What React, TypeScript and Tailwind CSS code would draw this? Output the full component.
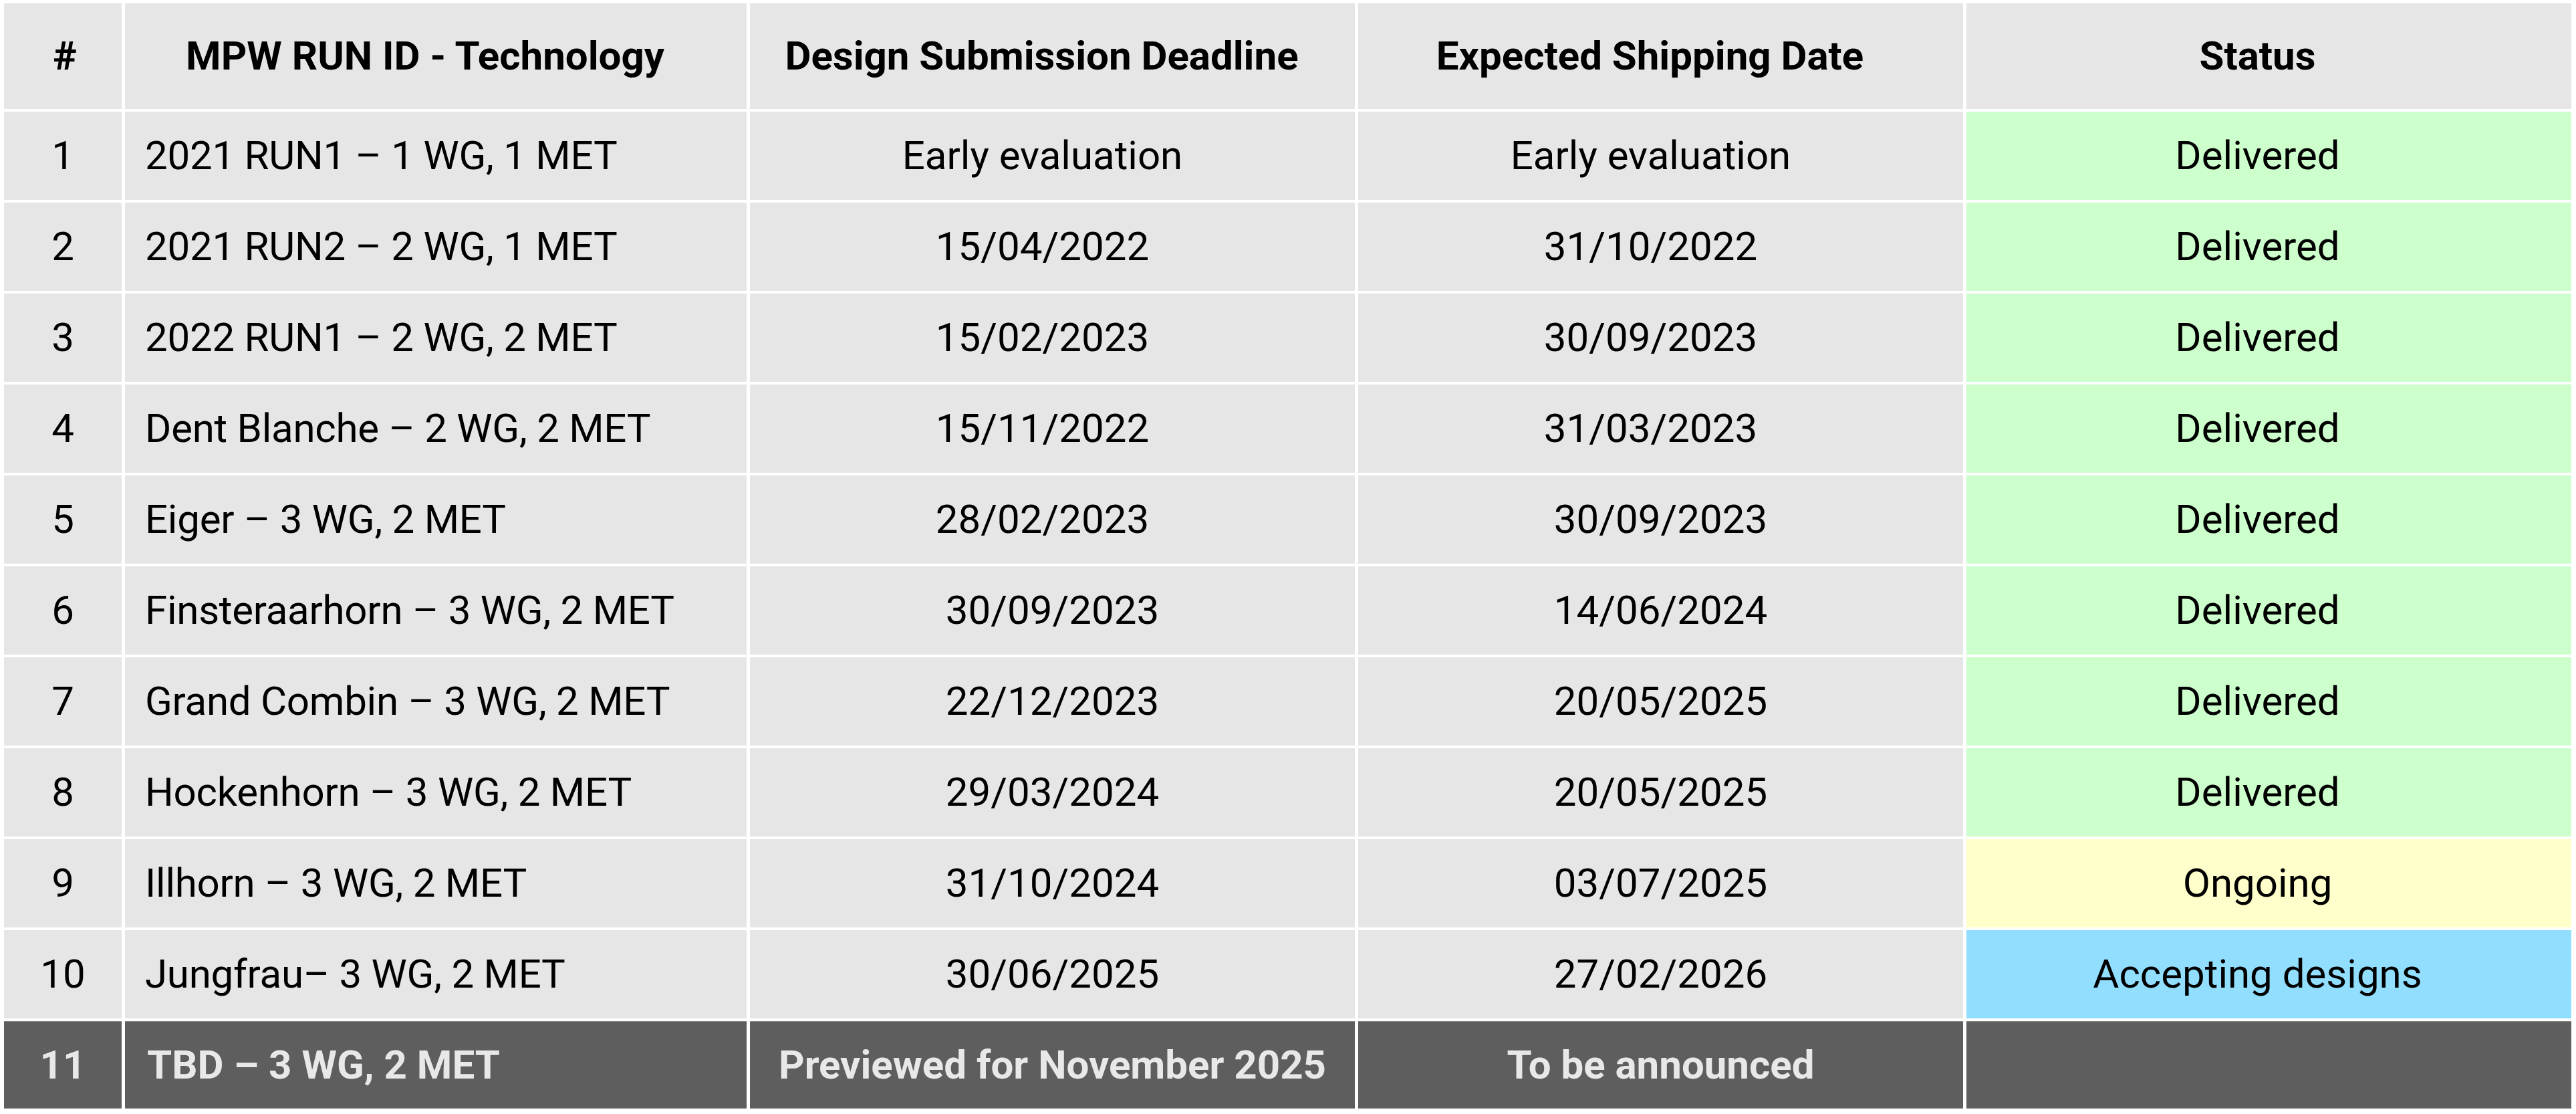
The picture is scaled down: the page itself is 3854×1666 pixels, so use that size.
import React from "react";

type Row = {
  n: string;
  name: string;
  design: string;
  ship: string;
  status: string;
  dShift?: boolean;
  sShift?: boolean;
};

const rows: Row[] = [
  { n: "1", name: "2021 RUN1 – 1 WG, 1 MET", design: "Early evaluation", ship: "Early evaluation", status: "Delivered", dShift: true, sShift: true },
  { n: "2", name: "2021 RUN2 – 2 WG, 1 MET", design: "15/04/2022", ship: "31/10/2022", status: "Delivered", dShift: true, sShift: true },
  { n: "3", name: "2022 RUN1 – 2 WG, 2 MET", design: "15/02/2023", ship: "30/09/2023", status: "Delivered", dShift: true, sShift: true },
  { n: "4", name: "Dent Blanche – 2 WG, 2 MET", design: "15/11/2022", ship: "31/03/2023", status: "Delivered", dShift: true, sShift: true },
  { n: "5", name: "Eiger – 3 WG, 2 MET", design: "28/02/2023", ship: "30/09/2023", status: "Delivered", dShift: true },
  { n: "6", name: "Finsteraarhorn – 3 WG, 2 MET", design: "30/09/2023", ship: "14/06/2024", status: "Delivered" },
  { n: "7", name: "Grand Combin – 3 WG, 2 MET", design: "22/12/2023", ship: "20/05/2025", status: "Delivered" },
  { n: "8", name: "Hockenhorn – 3 WG, 2 MET", design: "29/03/2024", ship: "20/05/2025", status: "Delivered" },
  { n: "9", name: "Illhorn – 3 WG, 2 MET", design: "31/10/2024", ship: "03/07/2025", status: "Ongoing" },
  { n: "10", name: "Jungfrau– 3 WG, 2 MET", design: "30/06/2025", ship: "27/02/2026", status: "Accepting designs" },
];

function statusBg(s: string) {
  if (s === "Delivered") return "bg-[#ccffcc]";
  if (s === "Ongoing") return "bg-[#ffffcc]";
  return "bg-[#91deff]";
}

export default function App() {
  const cell = "flex items-center h-[132px] bg-[#e6e6e6] text-black";
  const dark = "flex items-center h-[131px] bg-[#5e5e5e] border-y border-[#8a8a8a] text-[#e8e8e8] font-bold";
  const head = "flex items-center justify-center h-[158px] bg-[#e6e6e6] font-bold";
  return (
    <div className="w-[3854px] h-[1666px] bg-white pt-[5px] pl-[6px] overflow-hidden" style={{ fontFamily: "Roboto, 'Liberation Sans', sans-serif" }}>
      <div className="grid grid-cols-[176px_930px_905px_905px_905px] gap-x-[5px] gap-y-[4px] text-[60px] leading-none">
        <div className={`${head} pl-[6px]`}>#</div>
        <div className={`${head} pr-[32px]`}>MPW RUN ID - Technology</div>
        <div className={`${head} pr-[32px]`}>Design Submission Deadline</div>
        <div className={`${head} pr-[32px]`}>Expected Shipping Date</div>
        <div className={`${head} pr-[34px]`}>Status</div>
        {rows.map((r) => (
          <React.Fragment key={r.n}>
            <div className={`${cell} justify-center`}>{r.n}</div>
            <div className={`${cell} pl-[30px] tracking-[-0.25px]`}>{r.name}</div>
            <div className={`${cell} justify-center ${r.dShift ? "pr-[30px]" : ""}`}>{r.design}</div>
            <div className={`${cell} justify-center ${r.sShift ? "pr-[30px]" : ""}`}>{r.ship}</div>
            <div className={`flex items-center justify-center h-[132px] pr-[34px] text-black ${statusBg(r.status)}`}>{r.status}</div>
          </React.Fragment>
        ))}
        <div className={`${dark} justify-center`}>11</div>
        <div className={`${dark} pl-[33px]`}>TBD – 3 WG, 2 MET</div>
        <div className={`${dark} justify-center`}>Previewed for November 2025</div>
        <div className={`${dark} justify-center`}>To be announced</div>
        <div className={`${dark}`}></div>
      </div>
    </div>
  );
}
